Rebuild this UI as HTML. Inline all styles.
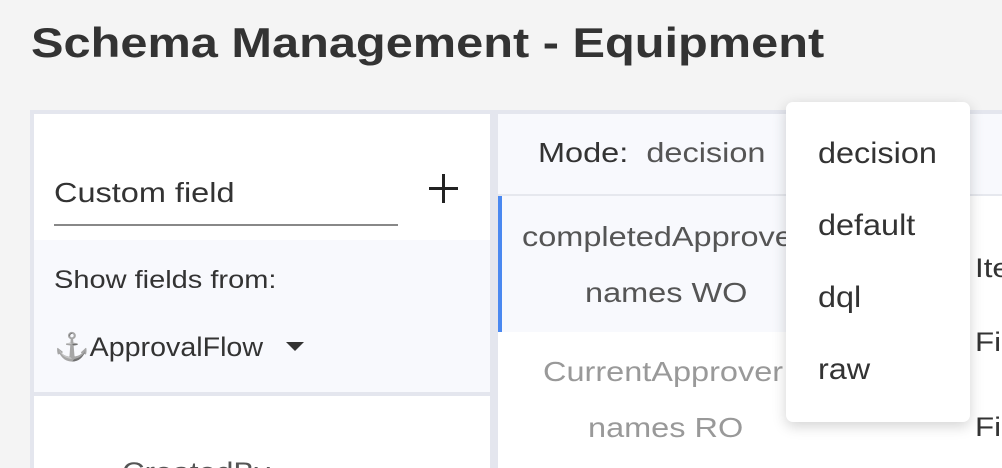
<!DOCTYPE html>
<html><head><style>
html,body{margin:0;width:1002px;height:468px;overflow:hidden}
body{background:#f4f4f4;font-family:"Liberation Sans",sans-serif;color:#333;position:relative}
.a{position:absolute}
.s{transform:scaleX(1.16);transform-origin:0 0;white-space:nowrap}
h1{position:absolute;left:31px;top:19px;margin:0;font-size:42px;font-weight:bold;color:#333;transform:scaleX(1.16);transform-origin:0 0;white-space:nowrap}
</style></head><body>
<h1>Schema Management - Equipment</h1>
<div class="a" style="left:30px;top:110px;width:980px;height:370px;background:#e4e6ee"></div>
<div class="a" style="left:34px;top:114px;width:456px;height:126px;background:#fff"></div>
<div class="a s" style="left:54px;top:177px;font-size:28px;color:#333">Custom field</div>
<div class="a" style="left:54px;top:224px;width:344px;height:2px;background:#888"></div>
<div class="a" style="left:429px;top:187px;width:29px;height:3px;background:#222"></div>
<div class="a" style="left:442px;top:174px;width:3px;height:29px;background:#222"></div>
<div class="a" style="left:34px;top:240px;width:456px;height:152px;background:#f8f9fd"></div>
<div class="a s" style="left:54px;top:266px;font-size:25px">Show fields from:</div>
<div class="a" style="left:54px;top:331px;font-size:27px;filter:grayscale(1);white-space:nowrap;transform:scaleX(1.06);transform-origin:0 0">⚓ApprovalFlow</div>
<div class="a" style="left:286px;top:342px;width:0;height:0;border-left:9px solid transparent;border-right:9px solid transparent;border-top:9px solid #333"></div>
<div class="a" style="left:34px;top:396px;width:456px;height:80px;background:#fff"></div>
<div class="a s" style="left:122px;top:457px;font-size:27px;color:#555">CreatedBy</div>
<div class="a" style="left:498px;top:114px;width:510px;height:80px;background:#f8f9fd"></div>
<div class="a s" style="left:538px;top:137px;font-size:28px;color:#333">Mode: <span style="color:#555">&nbsp;decision</span></div>
<div class="a" style="left:498px;top:194px;width:510px;height:2px;background:#e6e8ee"></div>
<div class="a" style="left:498px;top:196px;width:408px;height:136px;background:#f8f9fd"></div>
<div class="a" style="left:498px;top:196px;width:4px;height:136px;background:#4a88f0"></div>
<div class="a" style="left:498px;top:332px;width:408px;height:140px;background:#fff"></div>
<div class="a" style="left:906px;top:196px;width:100px;height:280px;background:#fff"></div>
<div class="a s" style="left:522px;top:221px;font-size:28px;color:#555">completedApprover</div>
<div class="a s" style="left:585px;top:277px;font-size:28px;color:#555">names WO</div>
<div class="a s" style="left:543px;top:356px;font-size:28px;color:#999">CurrentApprover</div>
<div class="a s" style="left:588px;top:412px;font-size:28px;color:#999">names RO</div>
<div class="a s" style="left:975px;top:253px;font-size:27px">Item</div>
<div class="a s" style="left:975px;top:327px;font-size:27px">Fi</div>
<div class="a s" style="left:975px;top:412px;font-size:27px">Fi</div>
<div class="a" style="left:786px;top:102px;width:184px;height:320px;background:#fff;border-radius:7px;box-shadow:0 4px 14px rgba(0,0,0,0.18)"></div>
<div class="a" style="left:818px;top:137px;font-size:30px;color:#333;transform:scaleX(1.08);transform-origin:0 0">decision</div>
<div class="a" style="left:818px;top:209px;font-size:30px;color:#333;transform:scaleX(1.08);transform-origin:0 0">default</div>
<div class="a" style="left:818px;top:281px;font-size:30px;color:#333;transform:scaleX(1.08);transform-origin:0 0">dql</div>
<div class="a" style="left:818px;top:353px;font-size:30px;color:#333;transform:scaleX(1.08);transform-origin:0 0">raw</div>
</body></html>
